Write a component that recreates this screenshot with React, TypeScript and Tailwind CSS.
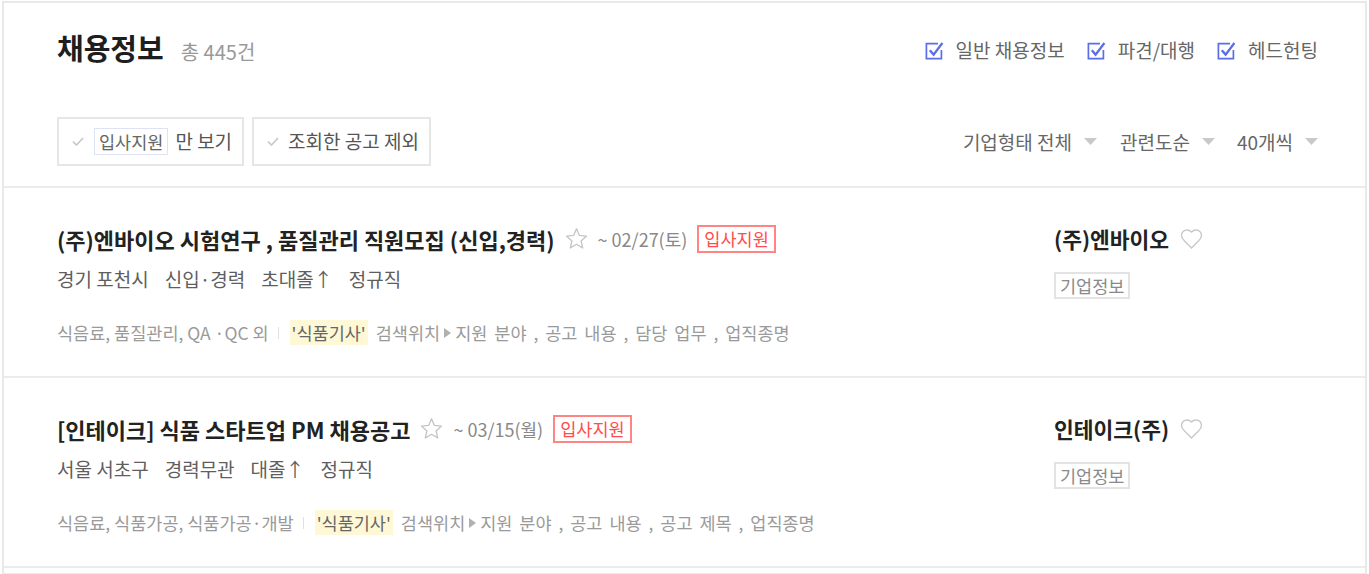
import React from "react";

function BlueCheck() {
  return (
    <svg width="19" height="19" viewBox="0 0 19 19" fill="none" className="shrink-0">
      <path d="M13 2.6 H1.4 V17.6 H16.4 V9" stroke="#5b6ee6" strokeWidth="1.7" fill="none" />
      <path d="M4.8 9.2 L8.6 13.6 L17.4 2" stroke="#5b6ee6" strokeWidth="2.3" fill="none" />
    </svg>
  );
}

function LightCheck() {
  return (
    <svg width="12" height="9" viewBox="0 0 12 9" fill="none" className="shrink-0">
      <polyline points="1,4.5 4.5,8 11,1" stroke="#c6c6c6" strokeWidth="1.6" fill="none" />
    </svg>
  );
}

function Caret() {
  return (
    <svg width="13" height="7" viewBox="0 0 13 7" className="ml-[12px] shrink-0">
      <polygon points="0,0 13,0 6.5,7" fill="#c9c9c9" />
    </svg>
  );
}

function Star() {
  return (
    <svg width="25" height="24" viewBox="0 0 24 24" fill="none" className="ml-[9px] shrink-0">
      <polygon
        points="12,1.8 14.9,8.4 22,9.1 16.6,13.9 18.2,21 12,17.3 5.8,21 7.4,13.9 2,9.1 9.1,8.4"
        stroke="#c4c4c4"
        strokeWidth="1.3"
        strokeLinejoin="round"
        fill="none"
      />
    </svg>
  );
}

function Heart() {
  return (
    <svg width="23" height="20" viewBox="1 2 22 20" fill="none" className="ml-[11px] shrink-0">
      <path
        d="M19 14c1.49-1.46 3-3.21 3-5.5A5.5 5.5 0 0 0 16.5 3c-1.76 0-3 .5-4.5 2-1.5-1.5-2.74-2-4.5-2A5.5 5.5 0 0 0 2 8.5c0 2.3 1.5 4.05 3 5.5l7 7Z"
        stroke="#c8c8c8"
        strokeWidth="1.4"
        fill="none"
      />
    </svg>
  );
}

function SmallArrow() {
  return (
    <svg width="7" height="10" viewBox="0 0 7 10" className="ml-[4px] mr-[4px] shrink-0">
      <polygon points="0,0 7,5 0,10" fill="#b0b0b0" />
    </svg>
  );
}

type Job = {
  title: string;
  date: string;
  conds: string[];
  tags: string;
  where: string;
  company: string;
};

const jobs: Job[] = [
  {
    title: "(주)엔바이오 시험연구 , 품질관리 직원모집 (신입,경력)",
    date: "~ 02/27(토)",
    conds: ["경기 포천시", "신입·경력", "초대졸↑", "정규직"],
    tags: "식음료, 품질관리, QA ·QC 외",
    where: "지원 분야 , 공고 내용 , 담당 업무 , 업직종명",
    company: "(주)엔바이오",
  },
  {
    title: "[인테이크] 식품 스타트업 PM 채용공고",
    date: "~ 03/15(월)",
    conds: ["서울 서초구", "경력무관", "대졸↑", "정규직"],
    tags: "식음료, 식품가공, 식품가공·개발",
    where: "지원 분야 , 공고 내용 , 공고 제목 , 업직종명",
    company: "인테이크(주)",
  },
];

function JobRow({ job }: { job: Job }) {
  return (
    <div className="flex border-b-2 border-[#ebebeb] pl-[53px] pr-[47px] pt-[37px] pb-[31px]">
      <div className="flex-1">
        <div className="flex items-center h-[28px]">
          <span className="text-[22px] leading-[28px] font-bold text-[#222] whitespace-nowrap">{job.title}</span>
          <Star />
          <span className="ml-[9px] text-[18px] leading-[28px] text-[#888] whitespace-nowrap">{job.date}</span>
          <span className="ml-[10px] h-[28px] px-[5px] border-2 border-[#ff8585] text-[17.5px] leading-[24px] text-[#ff4d4d] whitespace-nowrap">
            입사지원
          </span>
        </div>
        <div className="mt-[13px] flex gap-[16px] text-[19px] leading-[26px] text-[#5e5e5e]">
          {job.conds.map((c) => (
            <span key={c} className="whitespace-nowrap">{c}</span>
          ))}
        </div>
        <div className="mt-[28px] flex items-center text-[17.5px] leading-[24px] text-[#9a9a9a] whitespace-nowrap">
          <span>{job.tags}</span>
          <span className="ml-[9px] mr-[11px] w-px h-[12px] bg-[#e0e0e0]" />
          <span className="h-[25px] px-[2px] bg-[#fff8d6] text-[#666] leading-[25px]">'식품기사'</span>
          <span className="ml-[8px]">검색위치</span>
          <SmallArrow />
          <span className="[word-spacing:3px]">{job.where}</span>
        </div>
      </div>
      <div className="w-[264px]">
        <div className="flex items-center h-[28px]">
          <span className="text-[21.5px] leading-[28px] font-bold text-[#222] whitespace-nowrap">{job.company}</span>
          <Heart />
        </div>
        <div className="mt-[19px] inline-block h-[27px] border-2 border-[#e3e3e3] px-[4px] text-[17.5px] leading-[23px] text-[#8a8a8a]">
          기업정보
        </div>
      </div>
    </div>
  );
}

export default function App() {
  return (
    <div className="font-['Noto_Sans_CJK_KR','Noto_Sans',sans-serif] bg-white min-h-[574px] overflow-hidden">
      <div className="ml-[2px] mr-[2px] mt-[1px] border-2 border-b-0 border-[#e9e9e9]">
        <div className="pl-[53px] pr-[47px] pt-[27px] pb-[20px] border-b-2 border-[#ebebeb]">
          <div className="flex items-center justify-between h-[36px]">
            <div className="flex items-baseline">
              <h1 className="text-[29px] leading-[36px] font-bold text-[#1e1e1e]">채용정보</h1>
              <span className="ml-[17px] text-[20px] text-[#999]">총 445건</span>
            </div>
            <div className="flex items-center mt-[4px] text-[19px] leading-[24px] text-[#666]">
              <BlueCheck />
              <span className="ml-[12px]">일반 채용정보</span>
              <span className="ml-[22px]"><BlueCheck /></span>
              <span className="ml-[12px]">파견/대행</span>
              <span className="ml-[22px]"><BlueCheck /></span>
              <span className="ml-[12px]">헤드헌팅</span>
            </div>
          </div>
          <div className="mt-[51px] flex items-center justify-between">
            <div className="flex items-center gap-[8px]">
              <div className="flex items-center h-[49px] border-2 border-[#e6e6e6] pl-[13px] pr-[10px]">
                <LightCheck />
                <span className="ml-[10px] h-[27px] border border-[#dde3f4] px-[4px] text-[17.5px] leading-[25px] text-[#666]">입사지원</span>
                <span className="ml-[7px] text-[19px] text-[#555]">만 보기</span>
              </div>
              <div className="flex items-center h-[49px] border-2 border-[#e6e6e6] pl-[13px] pr-[10px]">
                <LightCheck />
                <span className="ml-[9px] text-[19px] text-[#555]">조회한 공고 제외</span>
              </div>
            </div>
            <div className="flex items-center text-[19px] leading-[24px] text-[#666]">
              <span>기업형태 전체</span>
              <Caret />
              <span className="ml-[23px]">관련도순</span>
              <Caret />
              <span className="ml-[22px]">40개씩</span>
              <Caret />
            </div>
          </div>
        </div>
        {jobs.map((j) => (
          <JobRow key={j.company} job={j} />
        ))}
        <div className="mt-[5px] border-t-2 border-[#ebebeb] h-[20px]" />
      </div>
    </div>
  );
}
